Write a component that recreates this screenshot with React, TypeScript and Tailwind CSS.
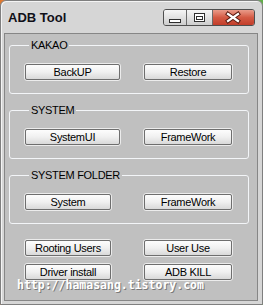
import React from 'react'

const ui = "[font-family:'Liberation_Sans',Arial,sans-serif]"

function Btn({ label, w }: { label: string; w: string }) {
  return (
    <div className={`${w} h-[18px] rounded-[3px] border border-[#ececec]`}>
      <button className="block w-full h-full rounded-[2px] border border-[#6e6e6e] bg-gradient-to-b from-[#fdfdfd] via-[#f0f0f0] to-[#d9d9d9] text-[11px] leading-[14px] tracking-[-0.3px] text-black">
        {label}
      </button>
    </div>
  )
}

function Group({ title, children }: { title: string; children: React.ReactNode }) {
  return (
    <fieldset className="ml-[4px] w-[240px] rounded-[3px] border border-[#f3f5f8] pl-[14px] pt-[12px] pb-[12px]">
      <legend className="ml-[5px] px-[2px] text-[11px] leading-[12px] tracking-[-0.3px] text-black">{title}</legend>
      <div className="grid grid-cols-[119px_90px]">{children}</div>
    </fieldset>
  )
}

export default function App() {
  return (
    <div className={`w-[263px] h-[305px] relative bg-[linear-gradient(to_right,#e2782c,#d8d8d8_20%,#d8d8d8_80%,#5fae46)] ${ui}`}>
      <div className="h-full rounded-t-[6px] border border-[#7f7f7f] bg-[#d6d6d6] shadow-[inset_1px_1px_0_#f4f4f4] flex flex-col">
        {/* title bar */}
        <div className="h-[32px] flex items-start justify-between pl-[7px] pr-[7px] pt-[8px]">
          <span className="text-[13px] leading-[15px] font-bold text-[#101018] pt-[1px]">ADB Tool</span>
          <div className="flex h-[17px] rounded-[3px] border border-[#4e4e4e] overflow-hidden">
            <div className="w-[23px] h-full bg-gradient-to-b from-[#f6f6f6] to-[#cdcdcd] border-r border-[#6a6a6a]">
              <svg width="23" height="15" viewBox="0 0 23 15">
                <rect x="5.5" y="9.5" width="11" height="3" fill="#fff" stroke="#2e2e2e" />
              </svg>
            </div>
            <div className="w-[26px] h-full bg-gradient-to-b from-[#f6f6f6] to-[#cdcdcd] border-r border-[#6a6a6a]">
              <svg width="25" height="15" viewBox="0 0 25 15">
                <rect x="7.5" y="3.5" width="10" height="8" fill="#fff" stroke="#2e2e2e" />
                <rect x="9.5" y="6.5" width="6" height="3" fill="none" stroke="#2e2e2e" />
              </svg>
            </div>
            <div className="w-[41px] h-full bg-gradient-to-b from-[#e99b8a] via-[#d45a44] to-[#c23d2a]">
              <svg width="41" height="15" viewBox="0 0 41 15">
                <path d="M15 4 L25 11 M25 4 L15 11" stroke="#5b1c12" strokeWidth="4.2" strokeLinecap="square" />
                <path d="M15 4 L25 11 M25 4 L15 11" stroke="#fff" strokeWidth="2.2" strokeLinecap="square" />
              </svg>
            </div>
          </div>
        </div>
        {/* client area */}
        <div className="relative ml-[3px] w-[254px] h-[268px] border border-[#868686] bg-[#c0c0c0] pt-[5px]">
          <Group title="KAKAO">
            <Btn label="BackUP" w="w-[97px]" />
            <Btn label="Restore" w="w-[90px]" />
          </Group>
          <div className="h-[10px]" />
          <Group title="SYSTEM">
            <Btn label="SystemUI" w="w-[97px]" />
            <Btn label="FrameWork" w="w-[90px]" />
          </Group>
          <div className="h-[10px]" />
          <Group title="SYSTEM FOLDER">
            <Btn label="System" w="w-[88px]" />
            <Btn label="FrameWork" w="w-[90px]" />
          </Group>
          <div className="grid grid-cols-[119px_90px] gap-y-[6px] pl-[19px] pt-[15px]">
            <Btn label="Rooting Users" w="w-[88px]" />
            <Btn label="User Use" w="w-[90px]" />
            <Btn label="Driver install" w="w-[88px]" />
            <Btn label="ADB KILL" w="w-[90px]" />
          </div>
          <span className="absolute left-[12px] top-[245px] text-[11.5px] leading-[12px] font-bold text-white [font-family:'DejaVu_Sans_Mono',monospace] [text-shadow:1px_1px_0_#7a7a7a]">
            http://hamasang.tistory.com
          </span>
        </div>
      </div>
    </div>
  )
}
